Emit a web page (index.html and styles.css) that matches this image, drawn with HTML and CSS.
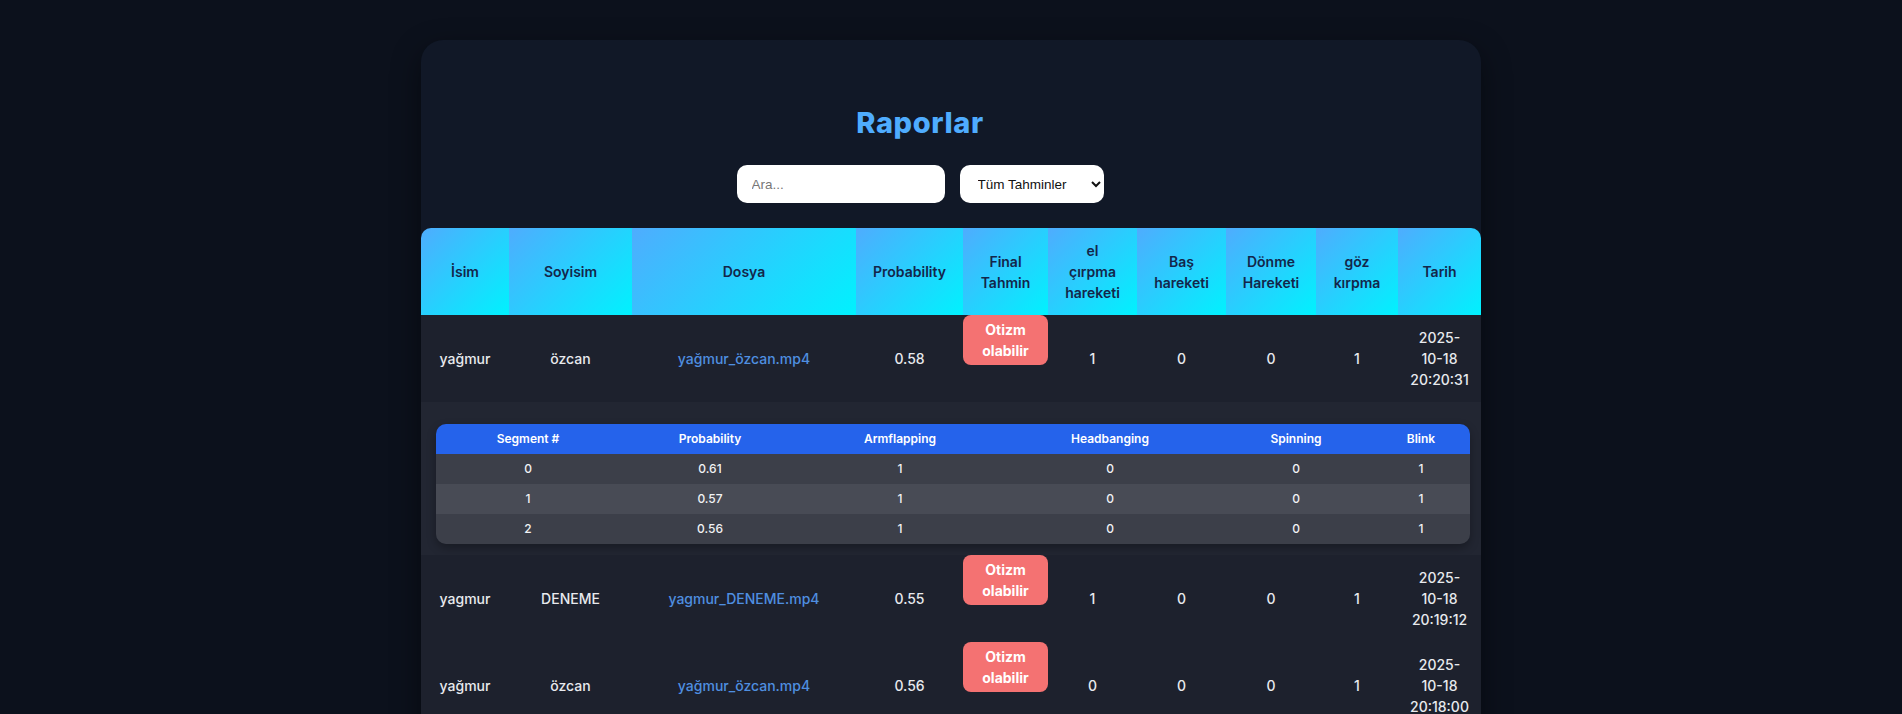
FILE: index.html
```html
<!DOCTYPE html>
<html lang="tr">
<head>
<meta charset="utf-8">
<title>Raporlar</title>
<link rel="stylesheet" href="styles.css">
</head>
<body>
<div class="card">
  <div class="head">
    <h2 class="title">Raporlar</h2>
    <div class="filters">
      <input class="search" type="text" placeholder="Ara...">
      <select class="pick">
        <option>Tüm Tahminler</option>
      </select>
    </div>
  </div>
  <table class="reports">
    <thead>
      <tr>
        <th>İsim</th><th>Soyisim</th><th>Dosya</th><th>Probability</th><th>Final Tahmin</th>
        <th>el<br>çırpma<br>hareketi</th><th>Baş hareketi</th><th>Dönme Hareketi</th><th>göz kırpma</th><th>Tarih</th>
      </tr>
    </thead>
    <tbody>
      <tr class="row">
        <td>yağmur</td><td>özcan</td><td><a class="file" href="#">yağmur_özcan.mp4</a></td><td>0.58</td>
        <td class="final"><span class="badge">Otizm olabilir</span></td>
        <td>1</td><td>0</td><td>0</td><td>1</td><td class="date">2025-<br>10-18<br>20:20:31</td>
      </tr>
      <tr class="detail">
        <td colspan="10">
          <table class="segments">
            <thead>
              <tr><th>Segment #</th><th>Probability</th><th>Armflapping</th><th>Headbanging</th><th>Spinning</th><th>Blink</th></tr>
            </thead>
            <tbody>
              <tr><td>0</td><td>0.61</td><td>1</td><td>0</td><td>0</td><td>1</td></tr>
              <tr><td>1</td><td>0.57</td><td>1</td><td>0</td><td>0</td><td>1</td></tr>
              <tr><td>2</td><td>0.56</td><td>1</td><td>0</td><td>0</td><td>1</td></tr>
            </tbody>
          </table>
        </td>
      </tr>
      <tr class="row">
        <td>yagmur</td><td>DENEME</td><td><a class="file" href="#">yagmur_DENEME.mp4</a></td><td>0.55</td>
        <td class="final"><span class="badge">Otizm olabilir</span></td>
        <td>1</td><td>0</td><td>0</td><td>1</td><td class="date">2025-<br>10-18<br>20:19:12</td>
      </tr>
      <tr class="row">
        <td>yağmur</td><td>özcan</td><td><a class="file" href="#">yağmur_özcan.mp4</a></td><td>0.56</td>
        <td class="final"><span class="badge">Otizm olabilir</span></td>
        <td>0</td><td>0</td><td>0</td><td>1</td><td class="date">2025-<br>10-18<br>20:18:00</td>
      </tr>
    </tbody>
  </table>
</div>
</body>
</html>
```

FILE: styles.css
```css
* { box-sizing: border-box; }

html, body {
  margin: 0;
  padding: 0;
  background: #0c111c;
  font-family: Inter, "Noto Sans", sans-serif;
  color: #e5e7eb;
}

body {
  padding-top: 40px;
  overflow: hidden;
  height: 714px;
}

.card {
  width: 1060px;
  margin: 0 auto;
  background: #111827;
  border-radius: 22px;
  padding-top: 40px;
  box-shadow: 0 10px 30px rgba(0, 0, 0, 0.45);
  min-height: 700px;
}

.head {
  padding-right: 62px;
  display: flex;
  flex-direction: column;
  align-items: center;
}

.title {
  margin: 22px 0 21px;
  font-size: 29px;
  line-height: 42px;
  font-weight: 800;
  color: #4facfe;
  letter-spacing: 0.6px;
}

.filters {
  display: flex;
  gap: 15px;
  margin-bottom: 25px;
}

.search {
  width: 208px;
  height: 38px;
  border: none;
  border-radius: 10px;
  padding: 0 15px;
  font-family: "Liberation Sans", Arial, sans-serif;
  font-size: 13.5px;
  background: #fff;
  color: #111;
}

.search::placeholder { color: #777; }

.pick {
  width: 144px;
  height: 38px;
  border: none;
  border-radius: 10px;
  padding: 0 4px 0 14px;
  font-family: "Liberation Sans", Arial, sans-serif;
  font-size: 13.5px;
  background: #fff;
  color: #111;
}

.reports {
  width: 1060px;
  table-layout: fixed;
  border-collapse: separate;
  border-spacing: 0;
  border-radius: 10px 10px 0 0;
  overflow: hidden;
}

.reports > thead th {
  background: linear-gradient(135deg, #4facfe 0%, #00f2fe 100%);
  color: #13264a;
  font-size: 14px;
  font-weight: 600;
  line-height: 21px;
  padding: 12px;
  text-align: center;
  vertical-align: middle;
}

.reports > thead th:nth-child(1) { width: 88px; }
.reports > thead th:nth-child(2) { width: 123px; }
.reports > thead th:nth-child(3) { width: 224px; }
.reports > thead th:nth-child(4) { width: 107px; }
.reports > thead th:nth-child(5) { width: 85px; }
.reports > thead th:nth-child(6) { width: 89px; }
.reports > thead th:nth-child(7) { width: 89px; }
.reports > thead th:nth-child(8) { width: 90px; }
.reports > thead th:nth-child(9) { width: 82px; }
.reports > thead th:nth-child(10) { width: 83px; }

.row > td {
  background: #1d212d;
  padding: 12px;
  font-size: 14px;
  font-weight: 500;
  line-height: 21px;
  text-align: center;
  vertical-align: middle;
  color: #e8eaee;
}

.row > td.final {
  padding: 0;
  vertical-align: top;
}

.row > td.date { padding: 12px 6px; }

.badge {
  display: block;
  background: #f47272;
  color: #fff;
  font-weight: 700;
  font-size: 14px;
  line-height: 21px;
  padding: 4px 6px;
  border-radius: 8px;
}

.file {
  color: #4f8fe0;
  text-decoration: none;
}

.detail > td {
  background: #222632;
  padding: 22px 11px 11px 15px;
}

.segments {
  width: 100%;
  table-layout: fixed;
  border-collapse: separate;
  border-spacing: 0;
  border-radius: 10px;
  overflow: hidden;
  box-shadow: 0 4px 10px rgba(0, 0, 0, 0.3);
}

.segments th {
  background: #2563eb;
  color: #fff;
  font-size: 12px;
  font-weight: 600;
  line-height: 16px;
  padding: 7px 6px;
  text-align: center;
}

.segments th:nth-child(1) { width: 184px; }
.segments th:nth-child(2) { width: 180px; }
.segments th:nth-child(3) { width: 200px; }
.segments th:nth-child(4) { width: 220px; }
.segments th:nth-child(5) { width: 152px; }
.segments th:nth-child(6) { width: 98px; }

.segments td {
  background: #3c3f49;
  color: #f1f2f4;
  font-size: 12px;
  font-weight: 500;
  line-height: 16px;
  padding: 7px 6px;
  text-align: center;
}

.segments tbody tr:nth-child(even) td { background: #484b55; }
```
